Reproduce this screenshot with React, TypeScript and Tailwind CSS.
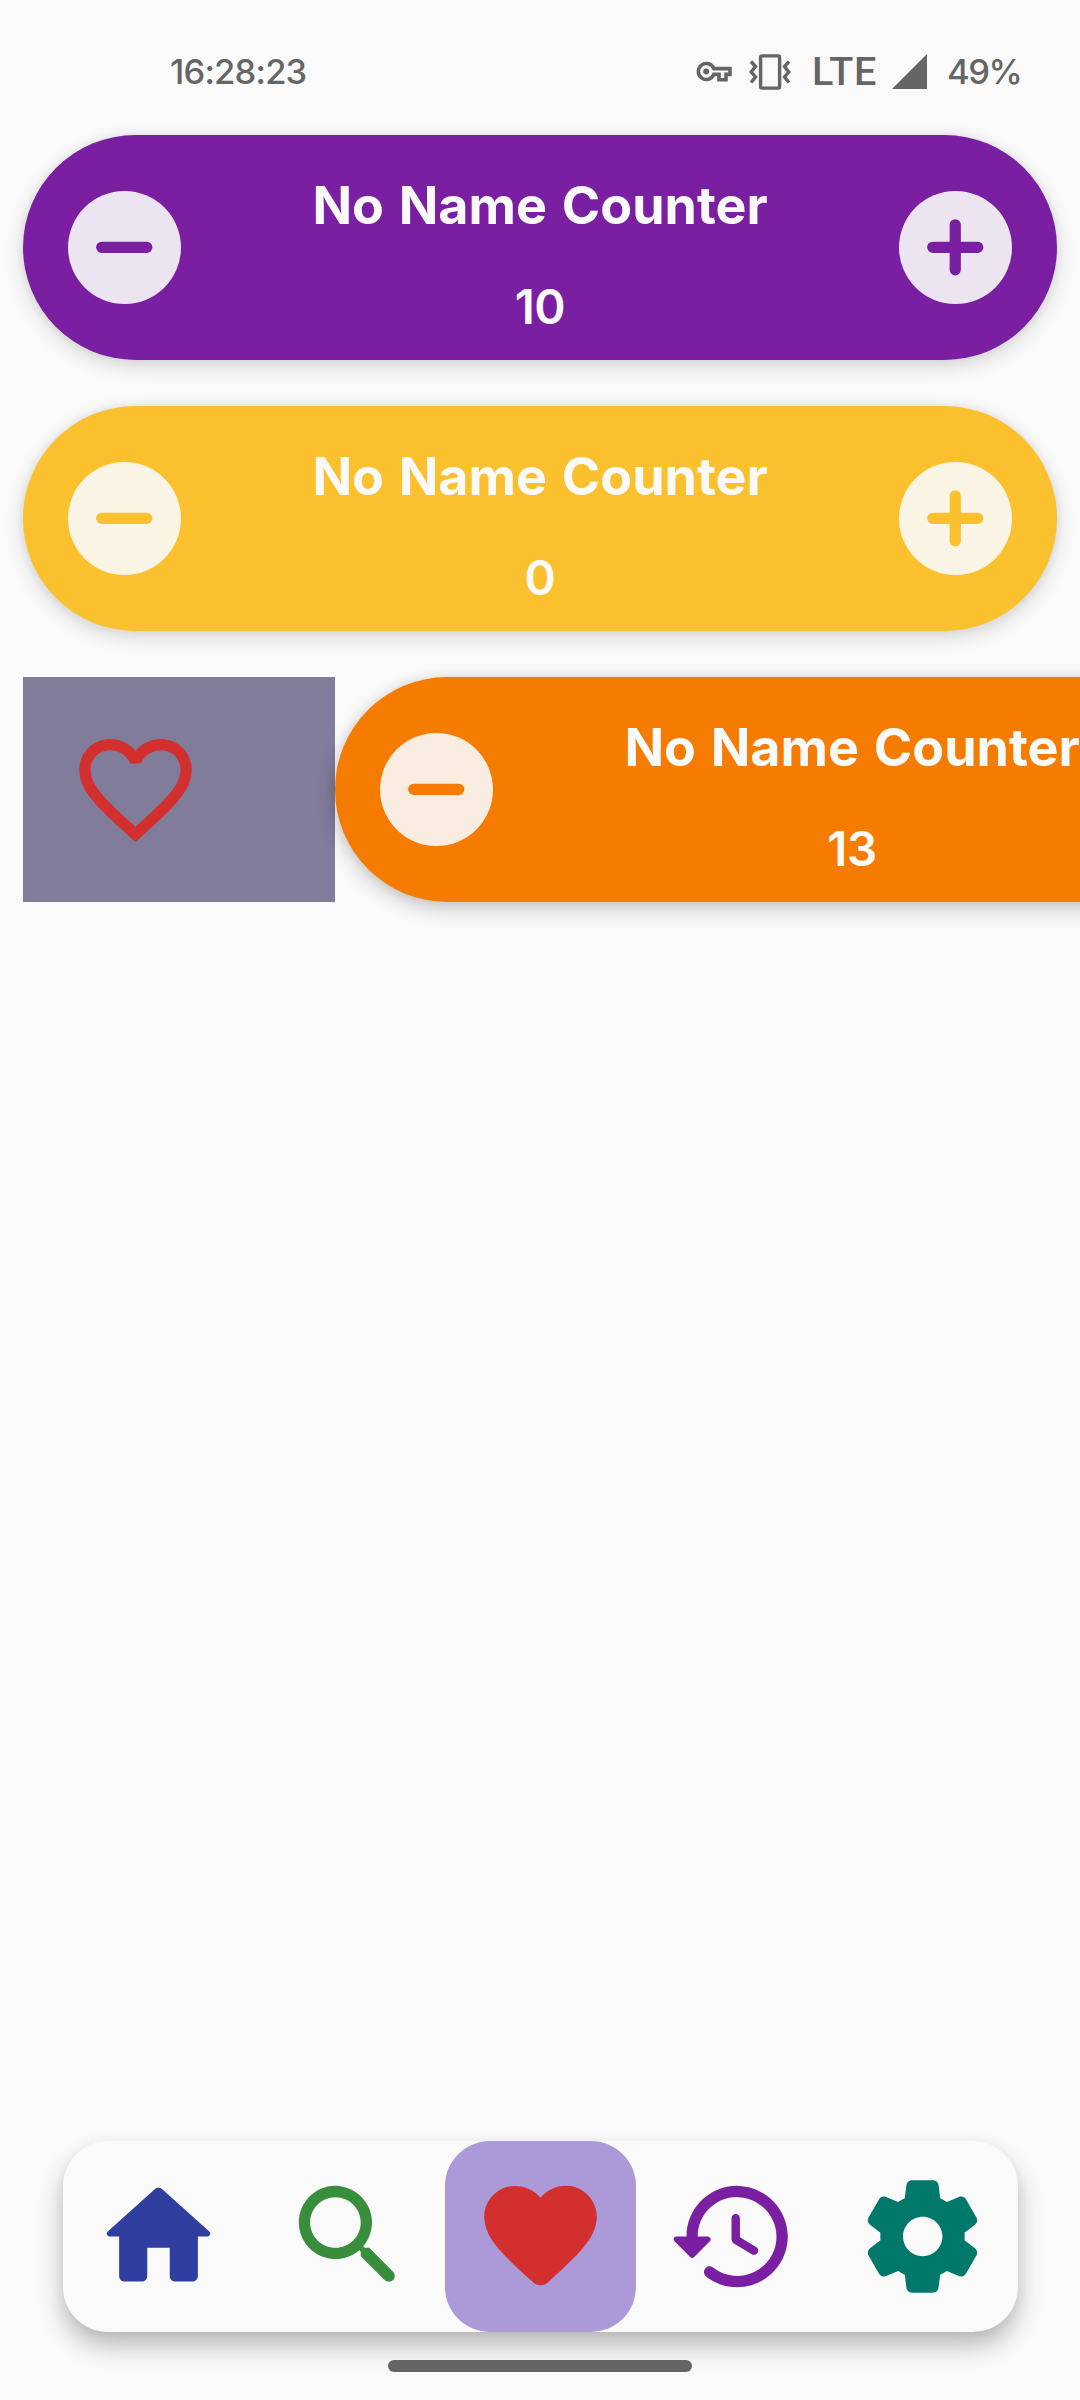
import React from "react";

const ICONS = {
  home: "M10 19v-5h4v5c0 .55.45 1 1 1h3c.55 0 1-.45 1-1v-7h1.7c.46 0 .68-.57.33-.87L12.67 3.6c-.38-.34-.96-.34-1.34 0l-8.36 7.53c-.34.3-.13.87.33.87H5v7c0 .55.45 1 1 1h3c.55 0 1-.45 1-1z",
  search:
    "M15.5 14h-.79l-.28-.27c1.2-1.4 1.82-3.31 1.48-5.34-.47-2.78-2.79-5-5.59-5.34-4.23-.52-7.79 3.04-7.27 7.27.34 2.8 2.56 5.12 5.34 5.59 2.03.34 3.94-.28 5.34-1.48l.27.28v.79l4.25 4.25c.41.41 1.08.41 1.49 0 .41-.41.41-1.08 0-1.49L15.5 14zm-6 0C7.01 14 5 11.99 5 9.5S7.01 5 9.5 5 14 7.01 14 9.5 11.99 14 9.5 14z",
  favorite:
    "M13.35 20.13c-.76.69-1.93.69-2.69-.01l-.11-.1C5.3 15.27 1.87 12.16 2 8.28c.06-1.7.93-3.33 2.34-4.29 2.64-1.8 5.9-.96 7.66 1.1 1.76-2.06 5.02-2.91 7.66-1.1 1.41.96 2.28 2.59 2.34 4.29.14 3.88-3.3 6.99-8.55 11.76l-.1.09z",
  history:
    "M13.26 3C8.17 2.86 4 6.95 4 12H2.21c-.45 0-.67.54-.35.85l2.79 2.8c.2.2.51.2.71 0l2.79-2.8c.31-.31.09-.85-.36-.85H6c0-3.9 3.18-7.05 7.1-7 3.72.05 6.85 3.18 6.9 6.9.05 3.91-3.1 7.1-7 7.1-1.61 0-3.1-.55-4.28-1.48-.4-.31-.96-.28-1.32.08-.42.42-.39 1.13.08 1.49C9 20.29 10.91 21 13 21c5.05 0 9.14-4.17 9-9.26-.13-4.69-4.05-8.61-8.74-8.74zm-.51 5c-.41 0-.75.34-.75.75v3.68c0 .35.19.68.49.86l3.12 1.85c.36.21.82.09 1.03-.26.21-.36.09-.82-.26-1.03l-2.88-1.71v-3.4c0-.4-.34-.74-.75-.74z",
  settings:
    "M19.5 12c0-.23-.01-.45-.03-.68l1.86-1.41c.4-.3.51-.86.26-1.3l-1.87-3.23c-.25-.44-.79-.62-1.25-.42l-2.15.91c-.37-.26-.76-.49-1.17-.68l-.29-2.31c-.06-.5-.49-.88-.99-.88h-3.73c-.51 0-.94.38-1 .88l-.29 2.31c-.41.19-.8.42-1.17.68l-2.15-.91c-.46-.2-1-.02-1.25.42L2.41 8.62c-.25.44-.14.99.26 1.3l1.86 1.41C4.51 11.55 4.5 11.77 4.5 12s.01.45.03.68l-1.86 1.41c-.4.3-.51.86-.26 1.3l1.87 3.23c.25.44.79.62 1.25.42l2.15-.91c.37.26.76.49 1.17.68l.29 2.31c.06.5.49.88.99.88h3.73c.5 0 .93-.38.99-.88l.29-2.31c.41-.19.8-.42 1.17-.68l2.15.91c.46.2 1 .02 1.25-.42l1.87-3.23c.25-.44.14-.99-.26-1.3l-1.86-1.41c.03-.23.04-.45.04-.68zm-7.46 3.5c-1.93 0-3.5-1.57-3.5-3.5s1.57-3.5 3.5-3.5 3.5 1.57 3.5 3.5-1.57 3.5-3.5 3.5z",
  favoriteBorder:
    "M16.5 3c-1.74 0-3.41.81-4.5 2.09C10.91 3.81 9.24 3 7.5 3 4.42 3 2 5.42 2 8.5c0 3.78 3.4 6.86 8.55 11.54L12 21.35l1.45-1.32C18.6 15.36 22 12.28 22 8.5 22 5.42 19.58 3 16.5 3zm-4.4 15.55l-.1.1-.1-.1C7.14 14.24 4 11.39 4 8.5 4 6.5 5.5 5 7.5 5c1.54 0 3.04.99 3.57 2.36h1.87C13.46 5.99 14.96 5 16.5 5c2 0 3.5 1.5 3.5 3.5 0 2.89-3.14 5.74-7.9 10.05z",
};

function Icon({ path, className }: { path: string; className: string }) {
  return (
    <svg viewBox="0 0 24 24" fill="currentColor" className={`size-[135px] ${className}`}>
      <path d={path} />
    </svg>
  );
}

function StatusBar() {
  return (
    <header className="flex h-[135px] items-start pl-[170px] pt-[47px] text-[#656565]">
      <span className="h-[50px] w-[526px] font-['Inter',sans-serif] text-[34.5px] font-medium leading-[50px] tracking-[-0.8px]">
        16:28:23
      </span>
      {/* VPN key */}
      <svg viewBox="0 0 36 22" className="mt-[14px] h-[22px] w-[36px] shrink-0" fill="none" stroke="currentColor" strokeWidth="3.6">
        <path d="M17.8 7.6A8 8 0 1 0 17.8 13.4H23V18.7H30V13.4H34V7.6Z" />
        <circle cx="10.2" cy="10.5" r="3" fill="currentColor" stroke="none" />
      </svg>
      {/* Vibrate mode */}
      <svg viewBox="0 0 42 36" className="ml-[17px] mt-[7px] h-[36px] w-[42px] shrink-0" fill="none" stroke="currentColor" strokeWidth="3.4">
        <rect x="11.6" y="1.9" width="19" height="32.2" rx="1.5" />
        <path d="M2 7.5L6.5 12.5L2.2 18L6.5 23L2 28.5M40 7.5L35.5 12.5L39.8 18L35.5 23L40 28.5" />
      </svg>
      <span className="ml-[21px] h-[50px] w-[80px] font-['Roboto',sans-serif] text-[39.5px] font-medium leading-[50px] tracking-[0.7px]">
        LTE
      </span>
      <svg viewBox="0 0 35 35" className="mt-[7px] size-[35px] shrink-0" fill="currentColor">
        <path d="M0 35L35 0V35Z" />
      </svg>
      <span className="ml-[20px] h-[50px] font-['Inter',sans-serif] text-[34.5px] font-medium leading-[50px] tracking-[-1.4px]">
        49%
      </span>
    </header>
  );
}

function RoundButton({ kind }: { kind: "minus" | "plus" }) {
  return (
    <button
      aria-label={kind === "minus" ? "Decrease" : "Increase"}
      className="grid size-[112.5px] shrink-0 place-items-center rounded-full bg-[#fafafa]/90"
    >
      <svg viewBox="0 0 20 20" className="size-[112.5px]" fill="none" stroke="currentColor" strokeWidth="2" strokeLinecap="round">
        <path d={kind === "minus" ? "M6 10H14" : "M6 10H14M10 6V14"} />
      </svg>
    </button>
  );
}

function CounterCard({ value, className }: { value: number; className: string }) {
  return (
    <article
      className={`flex h-[225px] w-[1034px] shrink-0 items-center justify-between rounded-full px-[45px] ${className}`}
    >
      <RoundButton kind="minus" />
      <div className="flex h-full flex-col items-center pt-[36px] font-['Inter',sans-serif] font-bold text-[#fafafa]">
        <h2 className="h-[70px] whitespace-nowrap text-[52px] leading-[70px] [word-spacing:2.5px]">
          No Name Counter
        </h2>
        <p className="mt-[36px] h-[60px] text-[47.5px] font-semibold leading-[60px] tracking-[-0.5px]">{value}</p>
      </div>
      <RoundButton kind="plus" />
    </article>
  );
}

const TABS = [
  { name: "home", icon: ICONS.home, color: "text-[#303f9f]", active: false },
  { name: "search", icon: ICONS.search, color: "text-[#388e3c]", active: false },
  { name: "favorites", icon: ICONS.favorite, color: "text-[#d32f2f]", active: true },
  { name: "history", icon: ICONS.history, color: "text-[#7b1fa2]", active: false },
  { name: "settings", icon: ICONS.settings, color: "text-[#00796b]", active: false },
];

export default function App() {
  return (
    <div className="flex h-[2400px] w-[1080px] flex-col overflow-hidden bg-[#fafafa]">
      <StatusBar />

      <main className="flex flex-1 flex-col gap-[46px] pl-[23px]">
        <CounterCard
          value={10}
          className="bg-[#7b1fa2] text-[#7b1fa2] shadow-[0_6px_20px_rgba(0,0,0,0.14),0_0_10px_rgba(0,0,0,0.07)]"
        />
        <CounterCard
          value={0}
          className="bg-[#fbc02d] text-[#fbc02d] shadow-[0_6px_20px_rgba(0,0,0,0.14),0_0_10px_rgba(0,0,0,0.07)]"
        />
        <div className="flex">
          <div className="flex h-[225px] w-[312px] shrink-0 items-center bg-[#807c9a] pl-[45px]">
            <Icon path={ICONS.favoriteBorder} className="text-[#d32f2f]" />
          </div>
          <CounterCard
            value={13}
            className="bg-[#f57c00] text-[#f57c00] shadow-[0_7px_20px_rgba(0,0,0,0.2),0_0_12px_rgba(0,0,0,0.08)]"
          />
        </div>
      </main>

      <nav className="ml-[63px] flex h-[191px] w-[955px] shrink-0 rounded-[45px] bg-[#fafafa] shadow-[0_14px_24px_rgba(0,0,0,0.26),0_2px_12px_rgba(0,0,0,0.04)]">
        {TABS.map((tab) => (
          <button
            key={tab.name}
            aria-label={tab.name}
            className={`grid size-[191px] place-items-center rounded-[45px] ${tab.active ? "bg-[#ac99d7]" : ""}`}
          >
            <Icon path={tab.icon} className={tab.color} />
          </button>
        ))}
      </nav>

      <div className="z-10 mb-[28px] mt-[28px] h-[12px] w-[304px] shrink-0 self-center rounded-full bg-[#656565]" />
    </div>
  );
}
